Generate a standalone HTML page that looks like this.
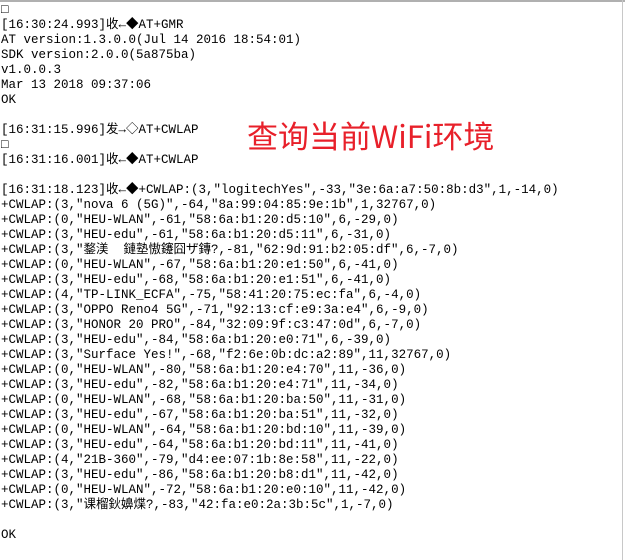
<!DOCTYPE html>
<html><head><meta charset="utf-8"><style>
html,body{margin:0;padding:0;background:#fff;}
body{width:625px;height:560px;overflow:hidden;position:relative;}
.top{position:absolute;left:0;top:0;width:625px;height:2px;background:#b0b0b0;}
.right{position:absolute;right:2px;top:0;width:1px;height:560px;background:#c8c8c8;}
.c{position:absolute;left:1px;top:3px;font-family:"Liberation Mono","Noto Sans CJK SC",monospace;font-size:12.5px;color:#000;}
.c div{height:15px;line-height:15px;overflow:visible;white-space:pre;}
.t{position:absolute;left:247px;top:114px;font-family:"Noto Sans CJK SC",sans-serif;font-size:31px;line-height:42px;color:#e8202a;}
</style></head><body>
<div class="top"></div><div class="right"></div>
<div class="c">
<div>□</div>
<div>[16:30:24.993]收←◆AT+GMR</div>
<div>AT version:1.3.0.0(Jul 14 2016 18:54:01)</div>
<div>SDK version:2.0.0(5a875ba)</div>
<div>v1.0.0.3</div>
<div>Mar 13 2018 09:37:06</div>
<div>OK</div>
<div> </div>
<div>[16:31:15.996]发→◇AT+CWLAP</div>
<div>□</div>
<div>[16:31:16.001]收←◆AT+CWLAP</div>
<div> </div>
<div>[16:31:18.123]收←◆+CWLAP:(3,"logitechYes",-33,"3e:6a:a7:50:8b:d3",1,-14,0)</div>
<div>+CWLAP:(3,"nova 6 (5G)",-64,"8a:99:04:85:9e:1b",1,32767,0)</div>
<div>+CWLAP:(0,"HEU-WLAN",-61,"58:6a:b1:20:d5:10",6,-29,0)</div>
<div>+CWLAP:(3,"HEU-edu",-61,"58:6a:b1:20:d5:11",6,-31,0)</div>
<div>+CWLAP:(3,"鍪渼  鏈塾慠鑳囧ザ鏄?,-81,"62:9d:91:b2:05:df",6,-7,0)</div>
<div>+CWLAP:(0,"HEU-WLAN",-67,"58:6a:b1:20:e1:50",6,-41,0)</div>
<div>+CWLAP:(3,"HEU-edu",-68,"58:6a:b1:20:e1:51",6,-41,0)</div>
<div>+CWLAP:(4,"TP-LINK_ECFA",-75,"58:41:20:75:ec:fa",6,-4,0)</div>
<div>+CWLAP:(3,"OPPO Reno4 5G",-71,"92:13:cf:e9:3a:e4",6,-9,0)</div>
<div>+CWLAP:(3,"HONOR 20 PRO",-84,"32:09:9f:c3:47:0d",6,-7,0)</div>
<div>+CWLAP:(3,"HEU-edu",-84,"58:6a:b1:20:e0:71",6,-39,0)</div>
<div>+CWLAP:(3,"Surface Yes!",-68,"f2:6e:0b:dc:a2:89",11,32767,0)</div>
<div>+CWLAP:(0,"HEU-WLAN",-80,"58:6a:b1:20:e4:70",11,-36,0)</div>
<div>+CWLAP:(3,"HEU-edu",-82,"58:6a:b1:20:e4:71",11,-34,0)</div>
<div>+CWLAP:(0,"HEU-WLAN",-68,"58:6a:b1:20:ba:50",11,-31,0)</div>
<div>+CWLAP:(3,"HEU-edu",-67,"58:6a:b1:20:ba:51",11,-32,0)</div>
<div>+CWLAP:(0,"HEU-WLAN",-64,"58:6a:b1:20:bd:10",11,-39,0)</div>
<div>+CWLAP:(3,"HEU-edu",-64,"58:6a:b1:20:bd:11",11,-41,0)</div>
<div>+CWLAP:(4,"21B-360",-79,"d4:ee:07:1b:8e:58",11,-22,0)</div>
<div>+CWLAP:(3,"HEU-edu",-86,"58:6a:b1:20:b8:d1",11,-42,0)</div>
<div>+CWLAP:(0,"HEU-WLAN",-72,"58:6a:b1:20:e0:10",11,-42,0)</div>
<div>+CWLAP:(3,"课榴鈥嬶煠?,-83,"42:fa:e0:2a:3b:5c",1,-7,0)</div>
<div> </div>
<div>OK</div>
</div>
<div class="t">查询当前WiFi环境</div>
</body></html>
